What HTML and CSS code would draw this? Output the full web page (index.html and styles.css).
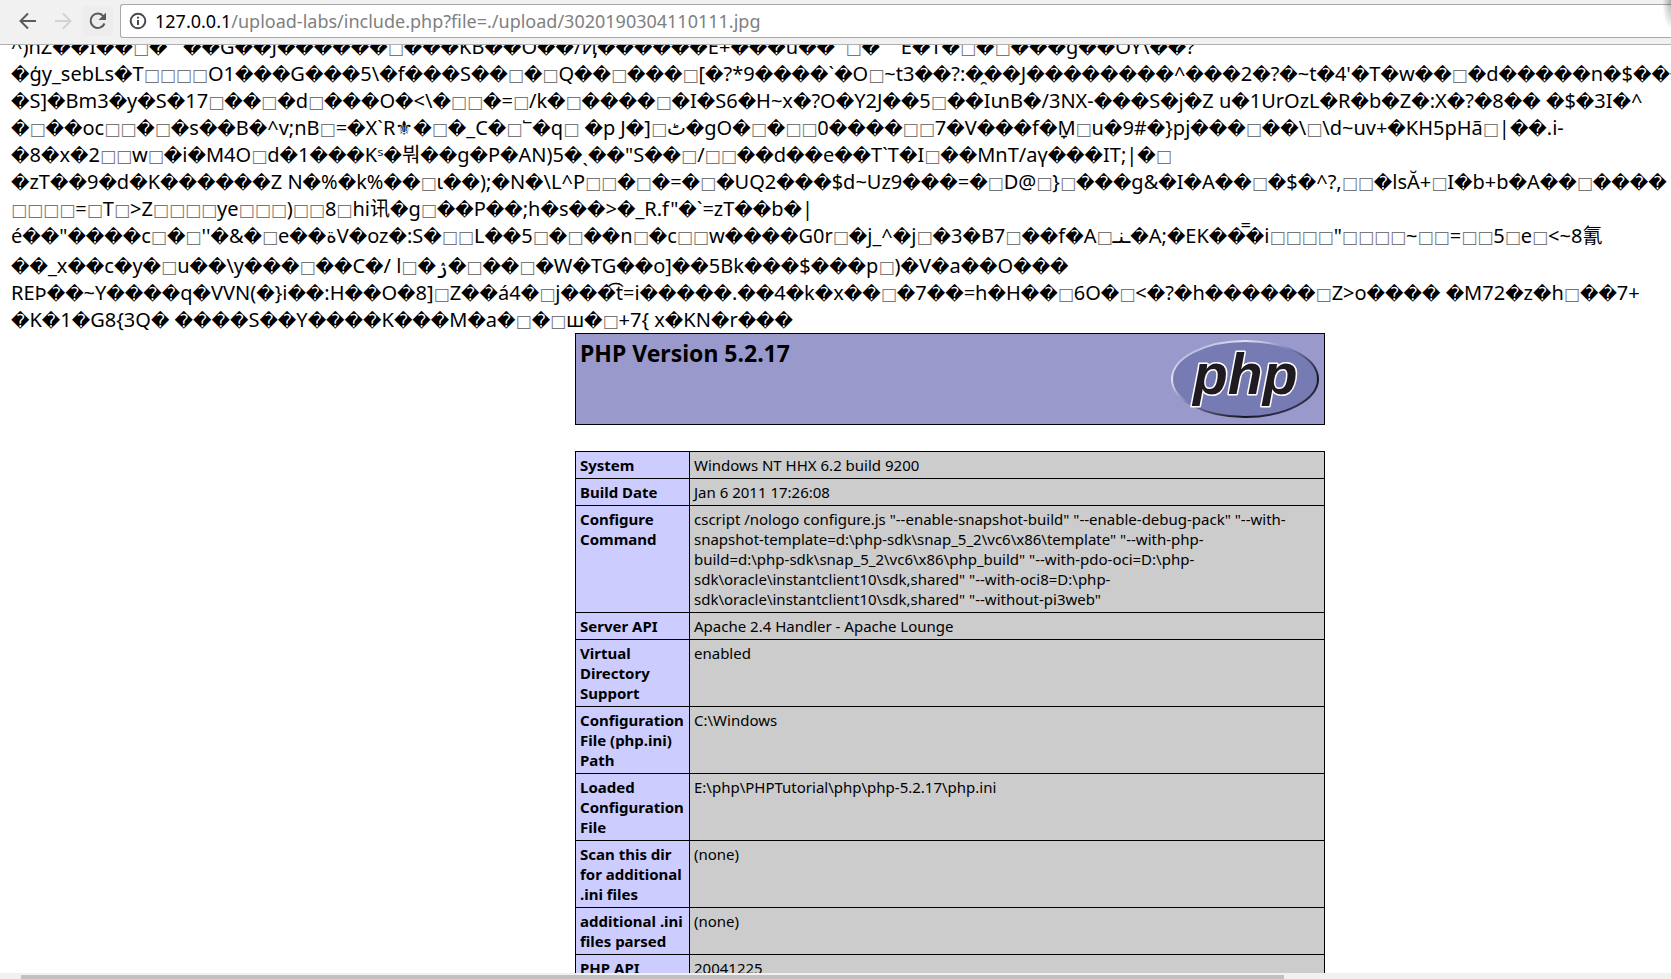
FILE: index.html
```html
<!DOCTYPE html>
<html lang="en">
<head>
<meta charset="utf-8">
<title>phpinfo()</title>
<link rel="stylesheet" href="styles.css">
</head>
<body>
<header class="toolbar">
  <button class="nav" type="button" aria-label="Back">
    <svg viewBox="0 0 20 20"><path d="M18 10H3M10 2.500L2.500 10L10 17.500"/></svg>
  </button>
  <button class="nav nav-off" type="button" aria-label="Forward">
    <svg viewBox="0 0 20 20"><path d="M2 10H17M10 2.500L17.500 10L10 17.500"/></svg>
  </button>
  <button class="nav nav-hover" type="button" aria-label="Reload">
    <svg viewBox="0 0 20 20"><path d="M16.500 12.500A7.200 7.200 0 1 1 15.500 5.300"/><path class="solid" d="M18 1.500V9H10.500Z"/></svg>
  </button>
  <div class="address">
    <svg class="info" viewBox="0 0 18 18"><circle cx="9" cy="9" r="7.300"/><path d="M9 8V13M9 4.800V6.600"/></svg>
    <label class="host" for="path">127.0.0.1</label>
    <input class="path" id="path" type="text" value="/upload-labs/include.php?file=./upload/3020190304110111.jpg">
  </div>
</header>
<main class="view">
  <div class="page">
    <div class="dump">
      <p>^)hZ��I��□�   ��G��J������□���KB��O��/Ҋ������E+���u��  □�    E�T�□�□���g��OY\��?</p>
      <p>�ģy_sebLs�T□□□□O1���G���5\�f���S��□�□Q��□���□[�?*9����`�O□~t3��?:�̯��J��������^���2�?�~t�4'�T�w��□�d�����n�$���</p>
      <p>�S]�Bm3�y�S�17□��□�d□���O�&lt;\�□□�=□/k�□����□�I�S6�H~x�?O�Y2J��5□��IտB�/3NX-���S�j�Z u�1UrOzL�R�b�Z�:X�?�8�� �$�3I�^</p>
      <p>�□��oc□□�□�s��B�^v;nB□=�X`R⚜�□�_C�□՟�q□ �p J�]□ٹ�gO�□�□□0����□□7�V���f�ָM□u�9#�}pj���□��\□\d~uv+�KH5pHã□|��.i-</p>
      <p>�8�x�2□□w□�i�M4O□d�1���Kˢ�붜��g�P�AN)5�ˎ��"S��□/□□��d��e��T`T�I□��MnT/aү���IT;|�□</p>
      <p>�zT��9�d�K������Z N�%�k%��□ι��);�N�\L^P□□�□�=�□�UQ2���$d~Uz9���=�□D@□}□���g&amp;�I�A��□�$�^?,□□�lsĂ+□I�b+b�A��□����</p>
      <p>□□□□=□T□&gt;Z□□□□ye□□□)□□8□hi讯�g□��P��;h�s��&gt;�_R.f"�`=zT��b�|</p>
      <p class="marks">é��"����c□�□''�&amp;�□e��ةV�oz�:S�□□L��5□�□��n□�c□□w����G0r□�j_^�j□�3�B7□��f�A□ـﻨـ�A;�EK��̿�i□□□□"□□□□~□□=□□5□e□&lt;~8氰</p>
      <p>��_x��c�y�□u��\y���□��C�/ l□�ۯ�□��□�W�TG��o]��5Bk���$���p□)�V�a��O���</p>
      <p>REÞ��~Y����q�VVN(�}i��:H��O�8]□Z��á4�□j���͡t=i�����.��4�k�x��□�7��=h�H��□6O�□&lt;�?�h������□Z&gt;o���� �M72�z�h□��7+</p>
      <p>�K�1�G8{3Q� ����S��Y����K���M�a�□�□ш�□+7{ x�KN�r���</p>
    </div>
    <section class="version">
      <h1>PHP Version 5.2.17</h1>
      <a href="http://www.php.net/" aria-label="PHP">
        <svg class="logo" viewBox="0 0 150 82">
          <defs>
            <linearGradient id="rim" x1="0" y1="0" x2="1" y2="1">
              <stop offset="0" stop-color="#8d8fc4"/>
              <stop offset="0.250" stop-color="#e4e4f4"/>
              <stop offset="0.450" stop-color="#7d80b6"/>
              <stop offset="0.750" stop-color="#16141c"/>
              <stop offset="1" stop-color="#55588c"/>
            </linearGradient>
          </defs>
          <ellipse cx="75" cy="41" rx="73" ry="38" fill="#777bb3" stroke="url(#rim)" stroke-width="2"/>
          <text x="23" y="56">php</text>
        </svg>
      </a>
    </section>
    <table class="info-table">
      <tr><th scope="row">System</th><td>Windows NT HHX 6.2 build 9200</td></tr>
      <tr><th scope="row">Build Date</th><td>Jan 6 2011 17:26:08</td></tr>
      <tr><th scope="row">Configure Command</th><td>cscript /nologo configure.js "--enable-snapshot-build" "--enable-debug-pack" "--with-<br>snapshot-template=d:\php-sdk\snap_5_2\vc6\x86\template" "--with-php-<br>build=d:\php-sdk\snap_5_2\vc6\x86\php_build" "--with-pdo-oci=D:\php-<br>sdk\oracle\instantclient10\sdk,shared" "--with-oci8=D:\php-<br>sdk\oracle\instantclient10\sdk,shared" "--without-pi3web"</td></tr>
      <tr><th scope="row">Server API</th><td>Apache 2.4 Handler - Apache Lounge</td></tr>
      <tr><th scope="row">Virtual<br>Directory<br>Support</th><td>enabled</td></tr>
      <tr><th scope="row">Configuration<br>File (php.ini)<br>Path</th><td>C:\Windows</td></tr>
      <tr><th scope="row">Loaded<br>Configuration<br>File</th><td>E:\php\PHPTutorial\php\php-5.2.17\php.ini</td></tr>
      <tr><th scope="row">Scan this dir<br>for additional<br>.ini files</th><td>(none)</td></tr>
      <tr><th scope="row">additional .ini<br>files parsed</th><td>(none)</td></tr>
      <tr><th scope="row">PHP API</th><td>20041225</td></tr>
    </table>
  </div>
</main>
<div class="scrollbar"><div class="thumb"></div></div>
<script src="dump.js"></script>
</body>
</html>
```
FILE: styles.css
```css
* {
  box-sizing: border-box;
}

body {
  margin: 0;
  height: 100vh;
  display: flex;
  flex-direction: column;
  overflow: hidden;
  background: #fff;
  color: #000;
  font-family: "Noto Sans", "Noto Sans CJK SC", "DejaVu Sans", sans-serif;
}

.toolbar {
  flex: none;
  position: relative;
  display: flex;
  align-items: center;
  gap: 5px;
  height: 45px;
  padding: 4px 0 6px 13px;
  background: #f1f1f1;
  border-bottom: 1px solid #b0b0b0;
}

.toolbar::after {
  content: "";
  position: absolute;
  top: 0;
  right: 0;
  width: 9px;
  height: 30px;
  background: radial-gradient(ellipse at 100% 0, rgba(0, 0, 0, 0.3), transparent 70%);
}

.nav {
  display: flex;
  align-items: center;
  justify-content: center;
  width: 30px;
  height: 30px;
  padding: 0;
  border: 0;
  border-radius: 3px;
  background: none;
  color: #5a5a5a;
}

.nav-off {
  color: #d2d2d2;
}

.nav-hover {
  background: #ededed;
}

.nav svg {
  width: 20px;
  height: 20px;
  fill: none;
  stroke: currentColor;
  stroke-width: 2;
}

.nav svg .solid {
  fill: currentColor;
  stroke: none;
}

.address {
  flex: 1;
  align-self: stretch;
  display: flex;
  align-items: center;
  padding-left: 8px;
  margin-left: 2px;
  background: #fff;
  border: 1px solid #a9a9a9;
  border-right: 0;
  border-radius: 3px 0 0 3px;
  font-size: 18px;
}

.info {
  width: 18px;
  height: 18px;
  margin-right: 8px;
  fill: none;
  stroke: #4a4a4a;
  stroke-width: 2;
}

.path {
  flex: 1;
  min-width: 0;
  padding: 0;
  border: 0;
  outline: 0;
  background: none;
  color: #808080;
  font: inherit;
}

.view {
  flex: 1;
  min-height: 0;
  overflow: hidden;
}

.page {
  width: calc(100% + 229px);
  margin-top: -12px;
}

.dump {
  padding-left: 11px;
  font-size: 20px;
  line-height: 27px;
}

.dump p {
  margin: 0;
  white-space: pre;
}

.dump .marks {
  padding: 0 0 3px;
}

.bad,
.box {
  font-family: "DejaVu Sans", sans-serif;
  font-size: 18px;
  line-height: 1;
}

.box {
  font-size: 17px;
  color: #777;
}

.version,
.info-table {
  width: 750px;
  margin: 0 auto;
}

.version {
  display: flex;
  justify-content: space-between;
  height: 92px;
  padding: 4px;
  background: #9999cc;
  border: 1px solid #000;
}

.version h1 {
  margin: 0;
  font-size: 23px;
  line-height: 30px;
}

.logo {
  display: block;
  width: 150px;
  height: 82px;
}

.logo text {
  font: italic bold 57px "Liberation Sans", sans-serif;
  fill: #1f1a1f;
  stroke: #fff;
  stroke-width: 3px;
  stroke-linejoin: round;
  paint-order: stroke;
}

.info-table {
  margin-top: 26px;
  border-collapse: collapse;
  background: #cccccc;
  font-size: 15px;
  line-height: 20px;
}

.info-table th,
.info-table td {
  padding: 3px 4px;
  border: 1px solid #000;
  text-align: left;
  vertical-align: top;
  white-space: nowrap;
}

.info-table th {
  width: 114px;
  padding-right: 0;
  background: #ccccff;
  white-space: normal;
}

.scrollbar {
  flex: none;
  height: 6px;
  padding: 2px 387px 0 21px;
  background: #f1f1f1;
}

.thumb {
  height: 4px;
  background: #c1c1c1;
}
```
FILE: dump.js
```js
// Wrap undecodable bytes and control characters so each kind gets its own style.
document.querySelectorAll(".dump p").forEach(function (line) {
  line.innerHTML = line.innerHTML
    .replace(/\uFFFD+/g, '<span class="bad">$&</span>')
    .replace(/\u25A1+/g, '<span class="box">$&</span>');
});
```
